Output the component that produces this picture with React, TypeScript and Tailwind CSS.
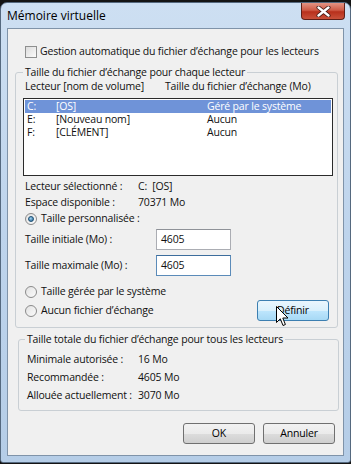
import React from "react";

const font = "font-['Open_Sans','Noto_Sans',sans-serif]";

function Radio({ checked = false }: { checked?: boolean }) {
  return (
    <span className="w-[12px] h-[12px] rounded-full border border-[#8a8a8a] bg-gradient-to-br from-[#e2e2e2] to-[#fbfbfb] flex items-center justify-center shrink-0">
      {checked && (
        <span className="w-[6px] h-[6px] rounded-full bg-[radial-gradient(circle_at_40%_35%,#9fd2f3,#1d5e8c)] border border-[#1c4f74]" />
      )}
    </span>
  );
}

function Cursor() {
  return (
    <svg width="13" height="21" viewBox="0 0 13 21" className="absolute left-[18px] top-[5px]">
      <path
        d="M0.5 0.5 L0.5 16.5 L4.3 12.8 L7 19.5 L9.4 18.5 L6.8 12 L12 12 Z"
        fill="#fff"
        stroke="#000"
        strokeWidth="1"
        strokeLinejoin="round"
      />
    </svg>
  );
}

function Btn({ children, hot = false }: { children: React.ReactNode; hot?: boolean }) {
  return (
    <button
      className={
        hot
          ? "relative w-[72px] h-[21px] rounded-[3px] border border-[#3c7fb1] bg-[linear-gradient(#eaf6fd_0%,#d9f0fc_50%,#bee6fd_51%,#a7d9f5_100%)] text-black"
          : "w-[72px] h-[21px] rounded-[3px] border border-[#707070] bg-[linear-gradient(#f2f2f2_0%,#ebebeb_50%,#dddddd_51%,#cfcfcf_100%)] text-black"
      }
    >
      {children}
      {hot && <Cursor />}
    </button>
  );
}

export default function App() {
  return (
    <div
      className={`w-[351px] h-[464px] bg-[#141414] pt-[2px] ${font} text-[10.5px] tracking-[-0.17px] text-[#111] whitespace-nowrap`}
    >
      <div className="h-[461px] rounded-t-[7px] rounded-b-[3px] border border-[#55697f] bg-gradient-to-b from-[#cddff2] via-[#bed4ec] to-[#b5cde7] flex flex-col">
        {/* title bar */}
        <div className="h-[25px] flex items-start justify-between pl-[6px] pr-[5px]">
          <span className="mt-[4px] text-[12px] tracking-normal text-black">Mémoire virtuelle</span>
          <div className="w-[44px] h-[17px] rounded-b-[4px] border border-t-0 border-[#5e1f17] bg-[linear-gradient(#e39484_0%,#cf5a45_45%,#b8301c_55%,#c9513a_100%)] flex items-center justify-center">
            <svg width="15" height="11" viewBox="0 0 15 11">
              <path d="M2.5 1.5 L12.5 9.5 M12.5 1.5 L2.5 9.5" stroke="#3b1410" strokeWidth="4" strokeLinecap="round" />
              <path d="M2.5 1.5 L12.5 9.5 M12.5 1.5 L2.5 9.5" stroke="#fff" strokeWidth="2.4" strokeLinecap="round" />
            </svg>
          </div>
        </div>

        {/* client area */}
        <div className="flex-1 mx-[6px] mb-[6px] bg-[#f0f0f0] border border-[#7f93a9] flex flex-col">
          <div className="mt-[17px] ml-[17px] h-[12px] flex items-center gap-[3px]">
            <span className="w-[12px] h-[12px] border border-[#8e8f8f] bg-gradient-to-br from-[#dcdcdc] to-[#fbfbfb] shrink-0" />
            <span>Gestion automatique du fichier d&rsquo;échange pour les lecteurs</span>
          </div>

          {/* group 1 */}
          <fieldset className="mt-[7px] ml-[7px] w-[323px] border border-[#c9cfd4] rounded-[3px] pl-[7px] pr-[4px] pb-[6px]">
            <legend className="px-[2px] leading-[15px]">Taille du fichier d&rsquo;échange pour chaque lecteur</legend>
            <div className="h-[14px] flex items-center pl-[2px]">
              <span className="w-[140px]">Lecteur [nom de volume]</span>
              <span>Taille du fichier d&rsquo;échange (Mo)</span>
            </div>
            <div className="mt-[4px] w-[310px] h-[78px] border border-[#2b2b2b] bg-white pt-[1px] px-[1px] leading-[13px]">
              <div className="h-[13px] flex items-center bg-[#6f93d8] text-white pl-[2px]">
                <span className="w-[29px]">C:</span>
                <span className="w-[151px]">[OS]</span>
                <span>Géré par le système</span>
              </div>
              <div className="h-[13px] flex items-center pl-[2px]">
                <span className="w-[29px]">E:</span>
                <span className="w-[151px]">[Nouveau nom]</span>
                <span>Aucun</span>
              </div>
              <div className="h-[13px] flex items-center pl-[2px]">
                <span className="w-[29px]">F:</span>
                <span className="w-[151px]">[CLÉMENT]</span>
                <span>Aucun</span>
              </div>
            </div>

            <div className="mt-[3px] h-[16px] flex items-center pl-[2px]">
              <span className="w-[113px]">Lecteur sélectionné :</span>
              <span>C:&nbsp;&nbsp;[OS]</span>
            </div>
            <div className="h-[16px] flex items-center pl-[2px]">
              <span className="w-[113px]">Espace disponible :</span>
              <span>70371 Mo</span>
            </div>
            <div className="h-[16px] flex items-center gap-[4px] pl-[2px]">
              <Radio checked />
              <span>Taille personnalisée :</span>
            </div>

            <div className="mt-[2px] h-[21px] flex items-center pl-[2px]">
              <span className="w-[131px]">Taille initiale (Mo) :</span>
              <div className="w-[75px] h-[21px] border border-[#abadb3] border-t-[#8f9298] bg-white flex items-center pl-[4px]">4605</div>
            </div>
            <div className="mt-[5px] h-[21px] flex items-center pl-[2px]">
              <span className="w-[131px]">Taille maximale (Mo) :</span>
              <div className="w-[75px] h-[21px] border border-[#5b8bb9] border-t-[#3d6d9c] bg-white flex items-center pl-[4px]">4605</div>
            </div>

            <div className="mt-[8px] h-[16px] flex items-center gap-[4px] pl-[2px]">
              <Radio />
              <span>Taille gérée par le système</span>
            </div>
            <div className="h-[21px] flex items-center justify-between pl-[2px] pr-[4px]">
              <div className="flex items-center gap-[4px]">
                <Radio />
                <span>Aucun fichier d&rsquo;échange</span>
              </div>
              <Btn hot>Définir</Btn>
            </div>
          </fieldset>

          {/* group 2 */}
          <fieldset className="mt-[4px] ml-[10px] w-[321px] border border-[#c9cfd4] rounded-[3px] pl-[6px] pb-[5px]">
            <legend className="px-[2px] leading-[15px]">Taille totale du fichier d&rsquo;échange pour tous les lecteurs</legend>
            <div className="mt-[4px] h-[18px] flex items-center pl-[2px]">
              <span className="w-[111px]">Minimale autorisée :</span>
              <span>16 Mo</span>
            </div>
            <div className="h-[18px] flex items-center pl-[2px]">
              <span className="w-[111px]">Recommandée :</span>
              <span>4605 Mo</span>
            </div>
            <div className="h-[18px] flex items-center pl-[2px]">
              <span className="w-[111px]">Allouée actuellement :</span>
              <span>3070 Mo</span>
            </div>
          </fieldset>

          <div className="mt-[12px] flex justify-end gap-[8px] pr-[8px]">
            <Btn>OK</Btn>
            <Btn>Annuler</Btn>
          </div>
        </div>
      </div>
    </div>
  );
}
